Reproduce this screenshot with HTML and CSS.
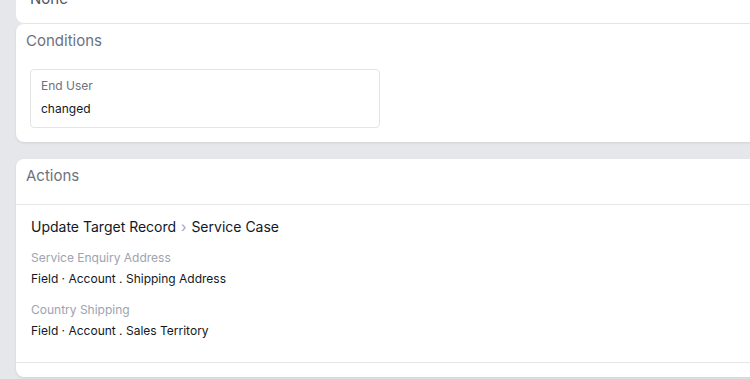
FILE: index.html
```html
<!DOCTYPE html>
<html>
<head>
    <meta charset="UTF-8">
    <title>Rule detail</title>
    <link rel="stylesheet" href="styles.css">
</head>
<body>
    <div class="page">
        <div class="card card-top">
            <div class="plain-value">None</div>
        </div>

        <div class="card card-conditions">
            <div class="card-head">Conditions</div>
            <div class="card-body">
                <div class="cond-box">
                    <div class="cond-label">End User</div>
                    <div class="cond-value">changed</div>
                </div>
            </div>
        </div>

        <div class="card card-actions">
            <div class="card-head card-head-line">Actions</div>
            <div class="action">
                <div class="action-title">Update Target Record <span class="crumb">&rsaquo;</span> Service Case</div>
                <div class="map-label">Service Enquiry Address</div>
                <div class="map-value">Field &middot; Account . Shipping Address</div>
                <div class="map-label map-next">Country Shipping</div>
                <div class="map-value">Field &middot; Account . Sales Territory</div>
            </div>
            <div class="card-foot"></div>
        </div>
    </div>
</body>
</html>
```

FILE: styles.css
```css
html, body {
    margin: 0;
    padding: 0;
}

body {
    background: #e5e7eb;
    font-family: Inter, "Noto Sans", sans-serif;
    color: #1f2937;
    overflow: hidden;
    height: 379px;
}

.page {
    width: 780px;
    margin-top: -24px;
    padding-left: 16px;
}

.card {
    background: #ffffff;
    border-radius: 8px;
    box-shadow: 0 1px 3px rgba(0, 0, 0, 0.07), 0 1px 2px rgba(0, 0, 0, 0.03);
}

.card-top {
    padding: 12px 14px 13px;
    margin-bottom: 1px;
    box-shadow: none;
}

.plain-value {
    font-size: 15px;
    line-height: 22px;
    color: #4b5563;
}

.card-conditions {
    margin-bottom: 17px;
}

.card-head {
    font-size: 15px;
    line-height: 21px;
    color: #6b7280;
    padding: 6px 10px 18px;
}

.card-head-line {
    border-bottom: 1px solid #e5e7eb;
}

.card-body {
    padding: 0 14px 14px;
}

.cond-box {
    width: 328px;
    border: 1px solid #e2e4e8;
    border-radius: 4px;
    padding: 7px 10px 8px;
}

.cond-label {
    font-size: 12px;
    line-height: 18px;
    color: #6b7280;
}

.cond-value {
    font-size: 12px;
    line-height: 20px;
    margin-top: 4px;
    color: #111827;
}

.action {
    padding: 11px 15px 21px;
    border-bottom: 1px solid #e5e7eb;
}

.action-title {
    font-size: 14px;
    line-height: 21px;
    color: #111827;
    margin-bottom: 12px;
}

.crumb {
    color: #9ca3af;
    margin: 0 1px;
}

.map-label {
    font-size: 12px;
    line-height: 18px;
    color: #9ca3af;
    margin-bottom: 2px;
}

.map-next {
    margin-top: 12px;
}

.map-value {
    font-size: 12px;
    line-height: 20px;
    color: #111827;
}

.card-foot {
    height: 14px;
}
```
